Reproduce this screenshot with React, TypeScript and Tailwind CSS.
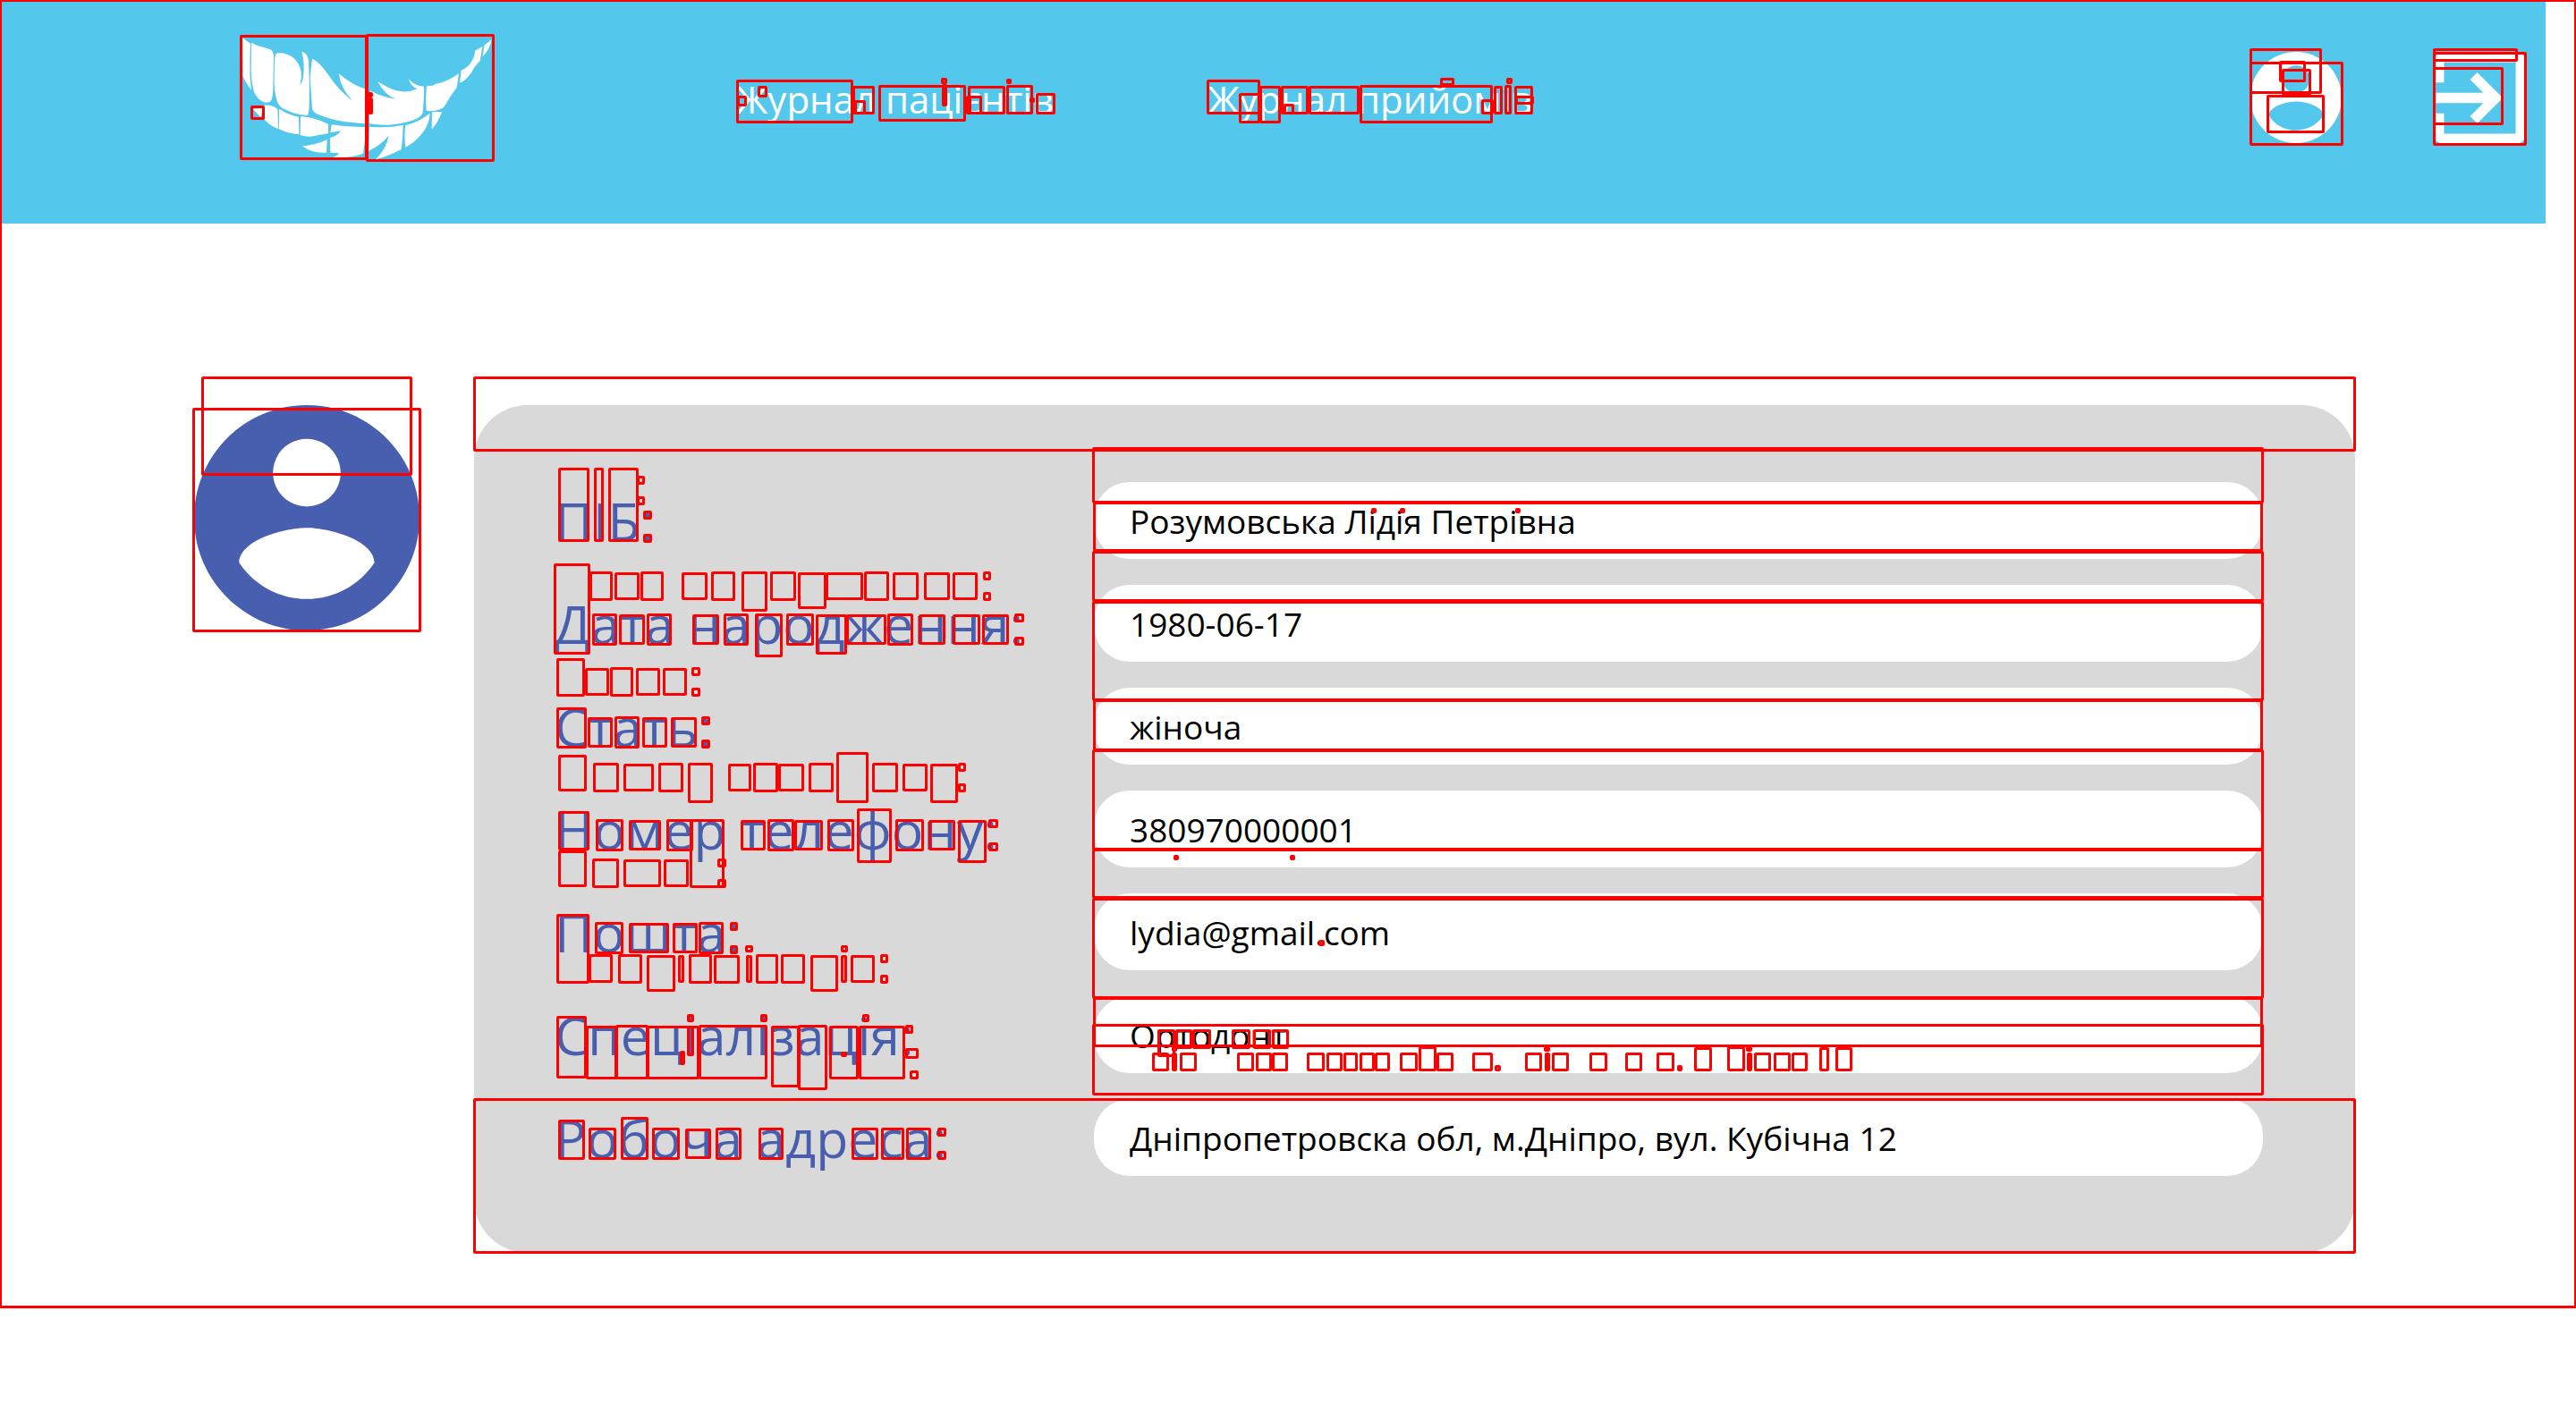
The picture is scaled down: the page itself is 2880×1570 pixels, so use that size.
type Box = [number, number, number, number];

/* Highlighted regions as left, top, right, bottom. */
const regions: Box[] = [
  [-1, -1, 2881, 1463],
  // logo
  [268, 39, 411, 179], [409, 38, 553, 181], [280, 118, 296, 134], [411, 103, 413, 105], [411, 109, 415, 128],
  // first link
  [823, 89, 954, 138], [847, 96, 858, 109], [824, 107, 835, 119], [953, 96, 978, 128], [955, 112, 968, 128],
  [982, 95, 1080, 136], [1052, 87, 1059, 94], [1053, 94, 1059, 119], [1082, 96, 1124, 128], [1082, 107, 1098, 128],
  [1080, 107, 1083, 128], [1125, 95, 1155, 128], [1125, 88, 1131, 94], [1151, 109, 1154, 115], [1158, 104, 1180, 128],
  // second link
  [1349, 89, 1409, 128], [1385, 104, 1409, 138], [1408, 96, 1432, 138], [1432, 96, 1463, 128], [1435, 116, 1447, 128],
  [1463, 96, 1520, 128], [1520, 95, 1669, 138], [1610, 87, 1626, 96], [1656, 111, 1670, 128], [1670, 96, 1680, 128],
  [1682, 95, 1690, 128], [1684, 87, 1691, 94], [1693, 96, 1714, 128], [1694, 107, 1715, 117],
  // header icons
  [2515, 54, 2596, 105], [2515, 69, 2620, 163], [2548, 68, 2578, 92], [2551, 77, 2584, 107], [2534, 106, 2599, 149],
  [2720, 54, 2815, 69], [2720, 58, 2825, 163], [2720, 75, 2799, 140],
  // avatar and card
  [225, 421, 461, 532], [215, 456, 471, 707], [529, 421, 2634, 505], [529, 1228, 2634, 1402],
  // name
  [624, 523, 659, 606], [664, 523, 675, 606], [680, 523, 714, 606], [712, 532, 721, 542], [712, 555, 721, 565],
  [719, 571, 729, 581], [719, 597, 729, 607],
  // birth date, upper
  [619, 630, 660, 732], [659, 639, 685, 672], [687, 640, 715, 671], [716, 639, 742, 672], [762, 640, 791, 671],
  [795, 639, 822, 672], [829, 639, 858, 684], [861, 639, 890, 672], [892, 640, 924, 681], [923, 640, 965, 671],
  [966, 639, 994, 672], [998, 640, 1027, 671], [1033, 640, 1062, 671], [1065, 640, 1093, 671], [1099, 639, 1108, 649],
  [1099, 662, 1108, 672],
  // birth date, lower
  [662, 686, 690, 722], [692, 687, 721, 721], [723, 686, 751, 722], [774, 687, 804, 721], [809, 686, 837, 722],
  [844, 686, 875, 735], [879, 686, 910, 722], [912, 687, 947, 732], [946, 687, 991, 721], [992, 686, 1021, 722],
  [1027, 687, 1057, 721], [1065, 687, 1096, 721], [1098, 687, 1128, 721], [1134, 686, 1145, 696], [1134, 712, 1145, 722],
  // sex
  [622, 736, 654, 779], [654, 747, 681, 778], [682, 746, 708, 779], [711, 747, 738, 778], [741, 747, 768, 778],
  [773, 746, 783, 756], [773, 769, 783, 779],
  [622, 791, 656, 837], [657, 802, 685, 836], [687, 801, 715, 837], [718, 802, 746, 836], [750, 802, 779, 836],
  [784, 801, 794, 811], [784, 827, 794, 837],
  // phone, upper
  [624, 844, 656, 885], [663, 853, 692, 886], [697, 854, 731, 885], [736, 853, 764, 886], [769, 853, 797, 898],
  [814, 854, 840, 885], [842, 853, 870, 886], [870, 854, 899, 885], [904, 853, 932, 886], [935, 841, 971, 898],
  [975, 853, 1004, 886], [1009, 854, 1037, 885], [1040, 854, 1071, 898], [1071, 853, 1080, 863], [1071, 876, 1080, 886],
  // phone, lower
  [624, 907, 659, 951], [666, 916, 697, 952], [703, 917, 739, 951], [745, 916, 775, 952], [771, 916, 810, 993],
  [828, 917, 856, 951], [858, 916, 888, 952], [888, 917, 920, 951], [925, 916, 955, 952], [958, 904, 997, 965],
  [1001, 916, 1033, 952], [1038, 917, 1068, 951], [1071, 917, 1103, 965], [1105, 916, 1116, 926], [1105, 942, 1116, 952],
  // mail
  [624, 951, 656, 992], [662, 960, 692, 993], [697, 961, 739, 992], [742, 961, 770, 992], [802, 960, 812, 970],
  [802, 983, 812, 993],
  [622, 1022, 659, 1100], [665, 1031, 697, 1067], [703, 1032, 748, 1066], [752, 1032, 780, 1066], [781, 1031, 809, 1067],
  [816, 1031, 825, 1041], [816, 1057, 825, 1067],
  // specialisation, upper
  [658, 1067, 685, 1099], [691, 1067, 718, 1100], [723, 1068, 755, 1109], [758, 1068, 765, 1099], [770, 1067, 796, 1100],
  [798, 1068, 827, 1100], [834, 1068, 841, 1099], [833, 1057, 842, 1065], [845, 1067, 870, 1100], [873, 1067, 900, 1100],
  [906, 1068, 937, 1109], [940, 1068, 947, 1099], [940, 1057, 948, 1065], [951, 1068, 978, 1099], [984, 1067, 993, 1077],
  [984, 1090, 993, 1100],
  // specialisation, lower
  [622, 1136, 656, 1206], [655, 1147, 690, 1207], [688, 1146, 725, 1207], [723, 1147, 782, 1207], [768, 1147, 776, 1181],
  [768, 1134, 776, 1143], [781, 1146, 858, 1207], [850, 1134, 858, 1143], [862, 1147, 894, 1216], [892, 1146, 925, 1219],
  [927, 1147, 960, 1207], [960, 1147, 1012, 1207], [964, 1134, 972, 1143], [1012, 1146, 1021, 1156],
  [1012, 1172, 1027, 1184], [1017, 1197, 1027, 1207], [760, 1175, 765, 1191], [940, 1176, 947, 1181],
  // work address
  [624, 1252, 654, 1297], [658, 1261, 689, 1297], [694, 1249, 725, 1297], [729, 1261, 760, 1297], [766, 1262, 795, 1296],
  [800, 1261, 829, 1297], [848, 1261, 876, 1297], [952, 1261, 982, 1297], [985, 1261, 1011, 1297],
  [1013, 1261, 1041, 1297], [1048, 1261, 1058, 1271], [1048, 1287, 1058, 1297],
  // field bands
  [1221, 500, 2531, 563], [1222, 561, 2530, 617], [1221, 616, 2531, 673], [1221, 672, 2531, 784],
  [1222, 782, 2530, 840], [1221, 838, 2531, 951], [1221, 949, 2531, 1005], [1221, 1004, 2531, 1117],
  [1222, 1115, 2530, 1171], [1221, 1145, 2531, 1225],
  // dots
  [1533, 568, 1539, 574], [1565, 568, 1571, 574], [1694, 568, 1700, 574], [1312, 956, 1318, 962],
  [1442, 956, 1448, 962], [1474, 1051, 1481, 1058],
  // specialisation value
  [1294, 1151, 1314, 1182], [1314, 1151, 1333, 1173], [1333, 1151, 1354, 1173], [1377, 1151, 1398, 1173],
  [1401, 1151, 1421, 1173], [1422, 1151, 1441, 1173], [1310, 1170, 1316, 1176], [1310, 1177, 1316, 1198],
  [1288, 1177, 1307, 1198], [1319, 1177, 1338, 1198], [1383, 1177, 1402, 1198], [1404, 1177, 1422, 1198],
  [1422, 1177, 1440, 1198], [1461, 1177, 1481, 1198], [1483, 1177, 1501, 1198], [1502, 1177, 1518, 1198],
  [1520, 1177, 1537, 1198], [1537, 1177, 1554, 1198], [1565, 1177, 1585, 1198], [1586, 1170, 1606, 1198],
  [1606, 1177, 1625, 1198], [1646, 1177, 1669, 1198], [1671, 1191, 1678, 1198], [1705, 1177, 1724, 1198],
  [1727, 1177, 1732, 1198], [1726, 1170, 1733, 1176], [1735, 1177, 1754, 1198], [1777, 1177, 1797, 1198],
  [1817, 1177, 1836, 1198], [1852, 1177, 1872, 1198], [1875, 1191, 1881, 1198], [1894, 1171, 1914, 1198],
  [1931, 1170, 1951, 1198], [1952, 1170, 1959, 1176], [1953, 1177, 1958, 1198], [1961, 1177, 1980, 1198],
  [1983, 1177, 2002, 1198], [2003, 1177, 2021, 1198], [2034, 1171, 2045, 1198], [2052, 1171, 2071, 1198],
];

const fields = [
  { id: "name", label: "ПІБ:", value: "Розумовська Лідія Петрівна" },
  { id: "birth", label: "Дата народження:", value: "1980-06-17" },
  { id: "sex", label: "Стать:", value: "жіноча" },
  { id: "phone", label: "Номер телефону:", value: "380970000001" },
  { id: "mail", label: "Пошта:", value: "lydia@gmail.com" },
  { id: "spec", label: "Спеціалізація:", value: "Ортодонт" },
  { id: "address", label: "Робоча адреса:", value: "Дніпропетровска обл, м.Дніпро, вул. Кубічна 12" },
];

function Feather() {
  return (
    <svg viewBox="60 60 846 414" className="h-[138px] w-[282px]" fill="currentColor" aria-hidden="true">
      <path d="M62 66 L90 86 Q87 150 89 205 L93 242 Q70 213 64 193Z" />
      <path d="M93 83 L112 92 L155 105 Q166 110 168 126 L166 240 Q165 270 158 279 Q150 287 135 283 Q112 272 102 248 Q92 215 92 180Z" />
      <path d="M184 117 Q215 117 238 137 Q262 162 261 197 L256 225 Q266 215 268 190 Q272 150 262 113 Q283 118 285 145 Q289 220 287 300 Q286 322 280 327 Q240 325 205 307 Q185 298 178 275 Q168 235 170 200 L171 140 Q172 118 184 117Z" />
      <path d="M297 137 Q320 146 350 189 Q385 243 432 278 Q392 235 386 186 Q430 226 480 240 L480 355 Q380 350 325 327 Q300 318 297 305 L290 200Z" />
      <path d="M492 244 Q530 266 578 273 Q540 258 517 214 Q560 240 580 244 Q615 253 650 238 Q626 230 621 205 Q640 229 672 230 Q672 280 668 318 Q662 335 630 345 Q560 367 489 355Z" />
      <path d="M681 228 L702 227 Q707 221 720 220 Q760 208 789 186 L782 234 Q760 262 740 298 Q725 315 680 312 Q677 270 681 228Z" />
      <path d="M797 176 Q822 166 832 145 Q843 128 843 110 L868 96 L860 145 Q845 158 830 185 Q810 212 792 218Z" />
      <path d="M899 72 Q895 102 869 130 L874 92Z" />
      <path d="M98 305 L131 302 L125 334Z" />
      <path d="M136 293 Q165 290 181 307 L184 373 Q155 362 138 342Z" />
      <path d="M186 305 Q215 325 252 332 L253 391 Q215 388 186 373Z" />
      <path d="M258 330 Q305 333 351 356 L351 387 Q335 392 318 393 Q285 404 257 393Z" />
      <path d="M362 358 Q420 368 479 366 L468 455 Q430 470 365 467 Q382 464 387 454 L358 452 L357 403 Q380 397 394 379 L358 385Z" />
      <path d="M347 408 L345 452 Q295 455 264 430 Q310 427 347 408Z" />
      <path d="M489 365 Q550 370 602 360 Q602 400 596 441 Q550 465 510 475 Q545 440 554 395 Q525 428 487 446Z" />
      <path d="M610 360 Q655 350 692 320 Q690 365 655 400 Q635 422 610 434 Q605 395 610 360Z" />
      <path d="M699 316 L732 315 Q720 350 698 374Z" />
    </svg>
  );
}

function Account({ className }: { className: string }) {
  return (
    <svg viewBox="2 2 20 20" className={className} fill="currentColor" aria-hidden="true">
      <path d="M12 2C6.48 2 2 6.48 2 12s4.48 10 10 10 10-4.48 10-10S17.52 2 12 2zm0 3c1.66 0 3 1.34 3 3s-1.34 3-3 3-3-1.34-3-3 1.34-3 3-3zm0 14.2c-2.5 0-4.71-1.28-6-3.22.03-1.99 4-3.08 6-3.08 1.99 0 5.97 1.09 6 3.08-1.29 1.94-3.5 3.22-6 3.22z" />
    </svg>
  );
}

function Exit() {
  return (
    <svg viewBox="3 3 18 18" className="size-[103px]" fill="currentColor" aria-hidden="true">
      <path d="M10.09 15.59L11.5 17l5-5-5-5-1.41 1.41L12.67 11H3v2h9.67l-2.58 2.59zM19 3H5c-1.11 0-2 .9-2 2v4h2V5h14v14H5v-4H3v4c0 1.1.89 2 2 2h14c1.1 0 2-.9 2-2V5c0-1.1-.9-2-2-2z" />
    </svg>
  );
}

export default function App() {
  return (
    <div className="relative min-h-screen overflow-hidden bg-white font-['Open_Sans','Noto_Sans',sans-serif] text-black">
      <header className="mr-[34px] flex items-center bg-[#53c8ec] pt-10 pr-[22px] pb-[72px] pl-[270px] text-white">
        <a href="#home" aria-label="Головна">
          <Feather />
        </a>
        <nav className="ml-[271px] flex gap-[172px] pt-1 text-[42px] leading-[54px] whitespace-nowrap">
          <a href="#patients">Журнал пацієнтів</a>
          <a href="#visits">Журнал прийомів</a>
        </nav>
        <div className="ml-auto flex items-center gap-[103px]">
          <button type="button" aria-label="Профіль">
            <Account className="size-[102px]" />
          </button>
          <button type="button" aria-label="Вийти">
            <Exit />
          </button>
        </div>
      </header>

      <main className="flex items-start gap-[61px] pt-[203px] pr-[247px] pl-[217px]">
        <Account className="size-[252px] shrink-0 text-[#475fae]" />
        <form className="flex flex-1 flex-col gap-[29px] rounded-[60px] bg-[#d9d9d9] py-[86px] pr-[103px] pl-[90px]">
          {fields.map((f) => (
            <div key={f.id} className="flex items-center">
              <label htmlFor={f.id} className="w-[603px] shrink-0 text-[59px] leading-[76px] text-[#475fae]">
                {f.label}
              </label>
              <input
                id={f.id}
                type="text"
                defaultValue={f.value}
                className="h-[86px] min-w-0 flex-1 rounded-[40px] bg-white px-10 text-[37px]"
              />
            </div>
          ))}
        </form>
      </main>

      <div className="pointer-events-none absolute inset-0" aria-hidden="true">
        {regions.map(([left, top, right, bottom], i) => (
          <div
            key={i}
            className="absolute rounded-[2px] border-3 border-[#ff0000]"
            style={{ left, top, width: right - left, height: bottom - top }}
          />
        ))}
      </div>
    </div>
  );
}
